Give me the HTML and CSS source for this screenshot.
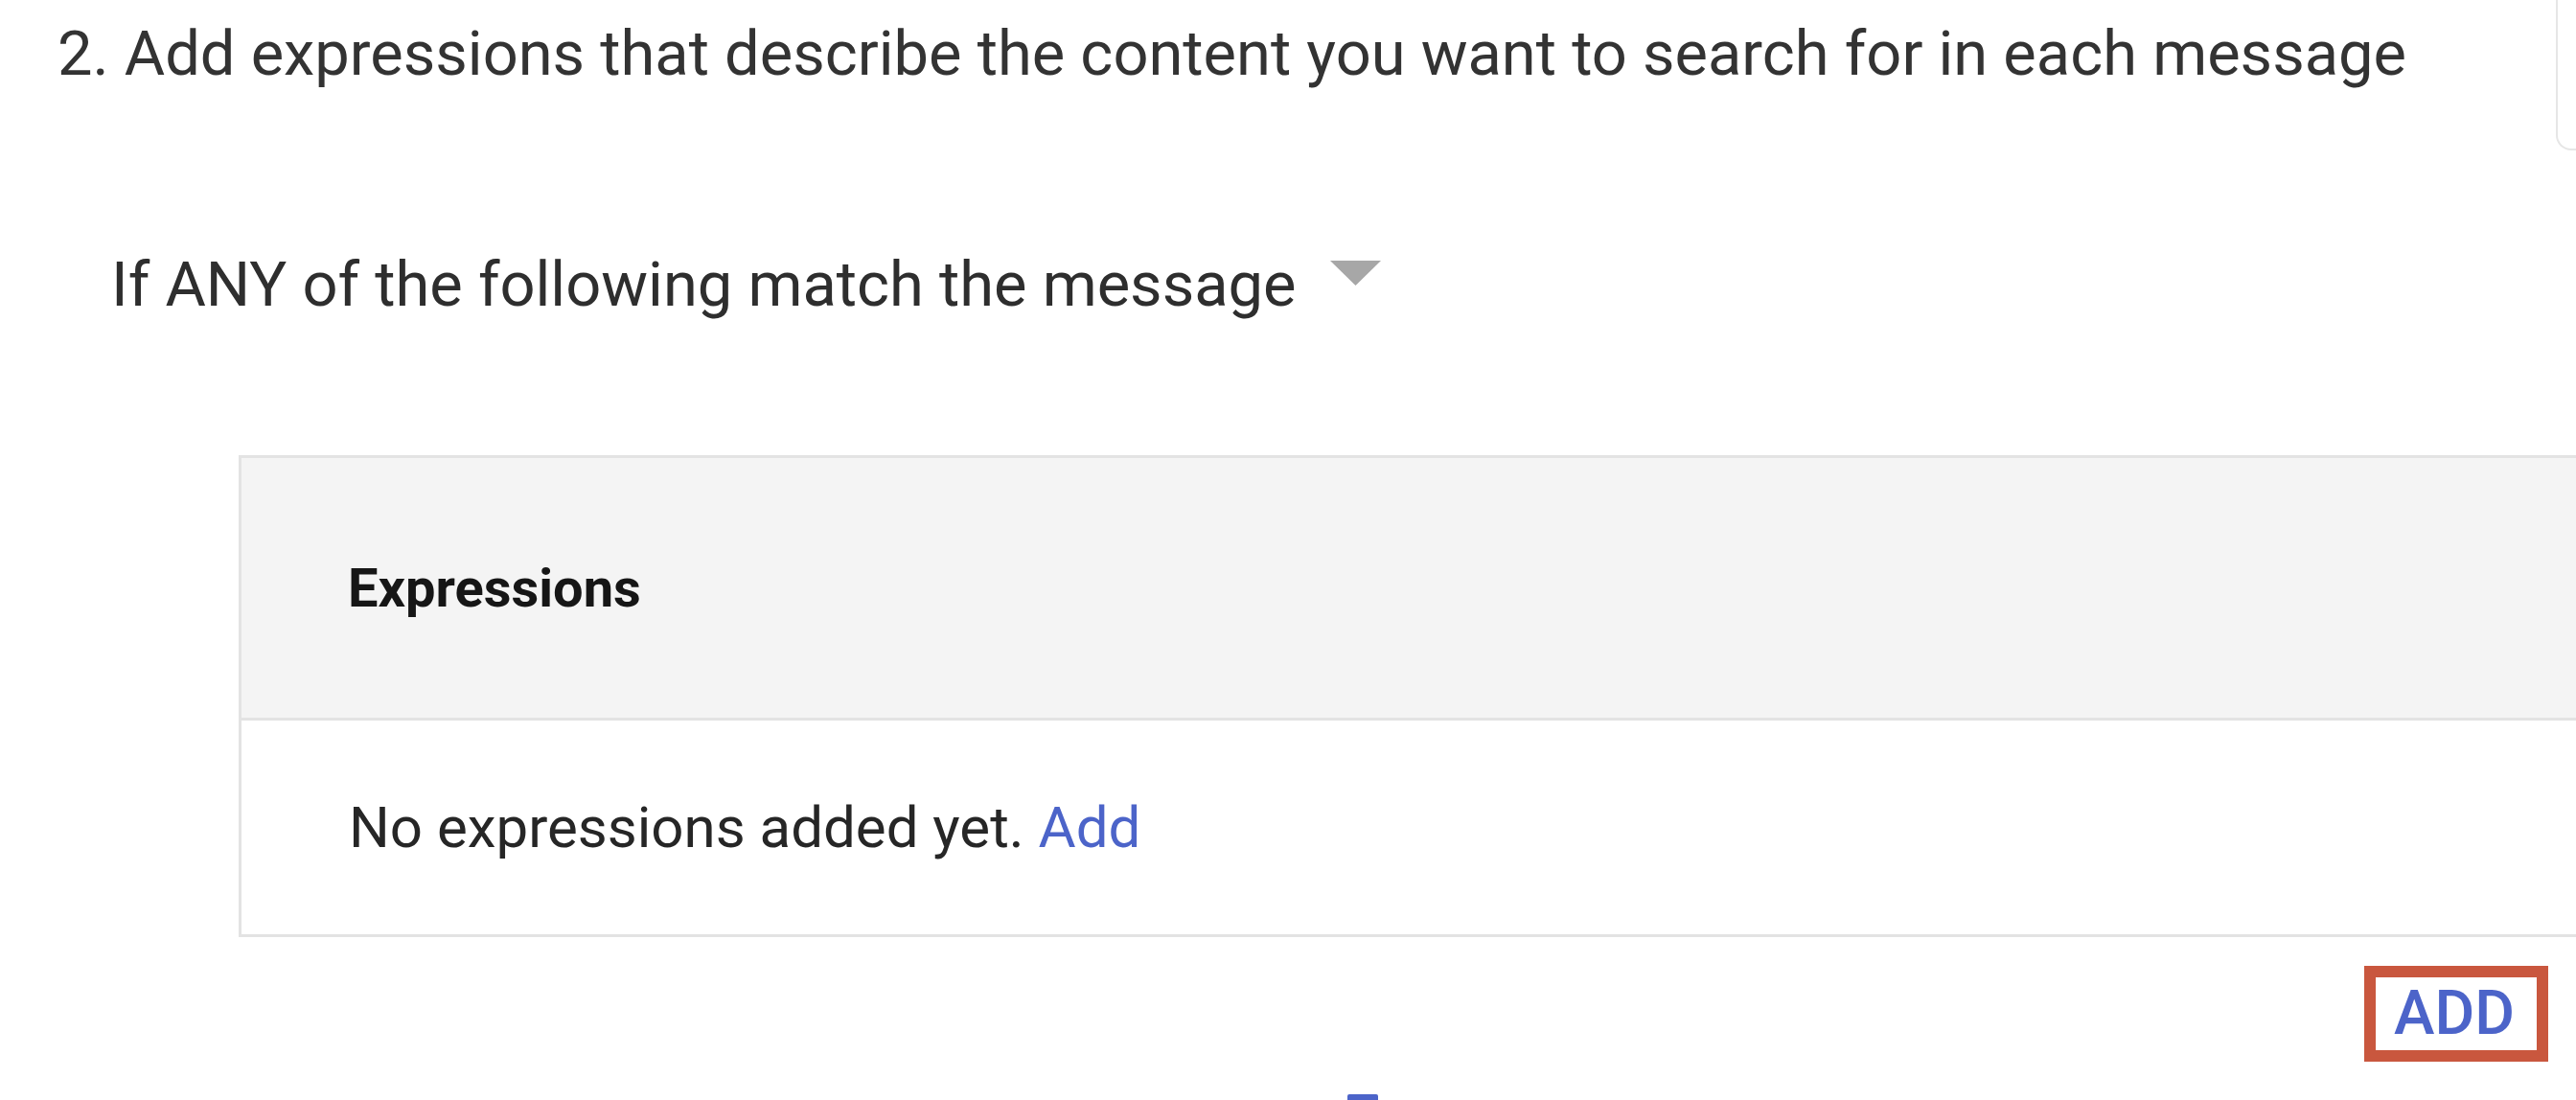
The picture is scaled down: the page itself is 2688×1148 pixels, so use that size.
FILE: index.html
```html
<!DOCTYPE html>
<html lang="en">
<head>
<meta charset="utf-8">
<title>Expressions</title>
<link rel="stylesheet" href="styles.css">
</head>
<body>
<div class="page">
  <div class="title-row">
    <h2 class="step-title">2. Add expressions that describe the content you want to search for in each message</h2>
    <div class="edge-panel"></div>
  </div>

  <div class="condition">
    <span class="condition-text">If ANY of the following match the message</span>
    <svg class="condition-arrow" width="53" height="26" viewBox="0 0 53 26" aria-hidden="true">
      <path d="M0 0 H53 L26.5 26 Z" fill="#a7a7a7"/>
    </svg>
  </div>

  <div class="expr-table">
    <div class="expr-head">Expressions</div>
    <div class="expr-body">
      <span class="empty-text">No expressions added yet.</span>&nbsp;<a class="add-link" href="#">Add</a>
    </div>
  </div>

  <div class="actions">
    <button class="add-btn" type="button">ADD</button>
  </div>

  <div class="next-bar"></div>
</div>
</body>
</html>
```

FILE: styles.css
```css
html, body {
  margin: 0;
  padding: 0;
  background: #ffffff;
  overflow: hidden;
}

body {
  font-family: Roboto, "Liberation Sans", Arial, sans-serif;
  color: #2b2b2b;
}

.page {
  width: 2688px;
  height: 1148px;
  overflow: hidden;
}

.title-row {
  display: flex;
  height: 96px;
  align-items: flex-start;
}

.step-title {
  flex: 1;
  margin: 0;
  padding: 16px 0 0 60px;
  font-size: 65px;
  line-height: 80px;
  font-weight: 400;
  color: #333333;
  white-space: nowrap;
}

.edge-panel {
  flex: none;
  width: 19px;
  height: 155px;
  border-left: 2px solid #e6e6e6;
  border-bottom: 2px solid #e6e6e6;
  border-bottom-left-radius: 16px;
}

.condition {
  display: flex;
  align-items: flex-start;
  margin-top: 161px;
  padding-left: 116px;
  height: 80px;
}

.condition-text {
  font-size: 65px;
  line-height: 80px;
  color: #2e2e2e;
  white-space: nowrap;
}

.condition-arrow {
  flex: none;
  margin-left: 35px;
  margin-top: 15px;
}

.expr-table {
  margin-top: 138px;
  margin-left: 249px;
  border: 3px solid #e3e3e3;
  border-right: none;
}

.expr-head {
  display: flex;
  align-items: center;
  height: 271px;
  padding-left: 111px;
  background: #f4f4f4;
  border-bottom: 3px solid #e3e3e3;
  font-size: 56px;
  font-weight: 700;
  color: #161616;
}

.expr-body {
  display: flex;
  align-items: center;
  height: 223px;
  padding-left: 112px;
  font-size: 60px;
  color: #262626;
  white-space: pre;
}

.add-link {
  color: #4c64c9;
  text-decoration: none;
}

.actions {
  display: flex;
  justify-content: flex-end;
  margin-top: 30px;
  padding-right: 29px;
}

.add-btn {
  box-sizing: border-box;
  width: 192px;
  height: 100px;
  padding: 0 4px 0 0;
  border: 12px solid #c9573e;
  background: #ffffff;
  font-family: Roboto, "Liberation Sans", Arial, sans-serif;
  font-size: 64px;
  font-weight: 500;
  line-height: 76px;
  color: #4c64c9;
  text-align: center;
}

.next-bar {
  margin-top: 34px;
  margin-left: 1406px;
  width: 32px;
  height: 10px;
  background: #4c64c9;
  border-radius: 2px 2px 0 0;
}
```
